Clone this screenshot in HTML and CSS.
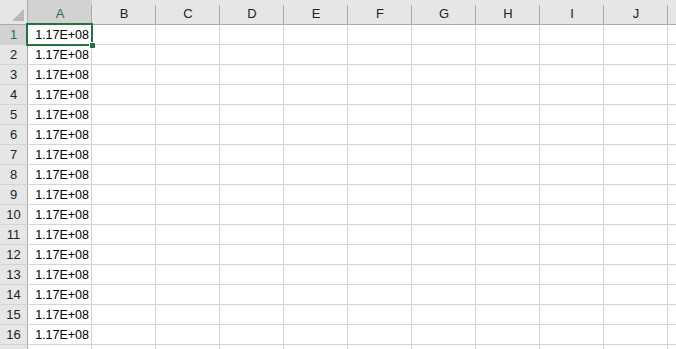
FILE: index.html
```html
<!DOCTYPE html>
<html lang="en">
<head>
    <meta charset="UTF-8">
    <title>Sheet1</title>
    <link rel="stylesheet" href="styles.css">
</head>
<body>
    <div class="sheet" id="sheet">
        <div class="corner"><span class="corner-arrow"></span></div>
    </div>
    <div class="selection"><span class="fill-handle"></span></div>

    <script>
        const cols = ['A', 'B', 'C', 'D', 'E', 'F', 'G', 'H', 'I', 'J', ''];
        const sheet = document.getElementById('sheet');

        cols.forEach(letter => {
            const head = document.createElement('div');
            head.className = 'col-head' + (letter === 'A' ? ' active' : '');
            head.textContent = letter;
            sheet.appendChild(head);
        });

        // row 17 only peeks in at the bottom edge, so it gets no label
        for (let r = 1; r <= 17; r++) {
            const rowHead = document.createElement('div');
            rowHead.className = 'row-head' + (r === 1 ? ' active' : '');
            if (r <= 16) rowHead.textContent = r;
            sheet.appendChild(rowHead);

            cols.forEach((letter, i) => {
                const cell = document.createElement('div');
                cell.className = 'cell';
                if (i === 0 && r <= 16) cell.textContent = '1.17E+08';
                sheet.appendChild(cell);
            });
        }
    </script>
</body>
</html>
```

FILE: styles.css
```css
body {
    margin: 0;
    overflow: hidden;
    background-color: white;
    font-family: "Liberation Sans", Arial, sans-serif;
}

.sheet {
    display: grid;
    grid-template-columns: 28px repeat(11, 64px);
    grid-template-rows: 25px;
    grid-auto-rows: 20px;
}

.corner {
    position: relative;
    background-color: #e6e6e6;
    border-right: 1px solid #ababab;
    border-bottom: 1px solid #ababab;
}

.corner-arrow {
    position: absolute;
    right: 3px;
    bottom: 3px;
    width: 0;
    height: 0;
    border-left: 12px solid transparent;
    border-bottom: 12px solid #b8b8b8;
}

.col-head {
    display: flex;
    align-items: center;
    justify-content: center;
    padding-top: 3px;
    font-size: 13px;
    color: #222;
    background: #e6e6e6 linear-gradient(#ababab, #ababab) right 5px / 1px 20px no-repeat;
    border-bottom: 1px solid #ababab;
}

.col-head.active {
    background-color: #d2d2d2;
    color: #217346;
    border-bottom: 2px solid #217346;
}

.row-head {
    display: flex;
    align-items: center;
    justify-content: center;
    font-size: 13px;
    color: #222;
    background-color: #e6e6e6;
    border-right: 1px solid #ababab;
    border-bottom: 1px solid #d4d4d4;
}

.row-head.active {
    background-color: #d2d2d2;
    color: #217346;
}

.cell {
    display: flex;
    align-items: center;
    justify-content: flex-end;
    padding-right: 2px;
    font-size: 12.5px;
    color: #000;
    border-right: 1px solid #d4d4d4;
    border-bottom: 1px solid #d4d4d4;
}

.selection {
    position: absolute;
    left: 26px;
    top: 23px;
    width: 63px;
    height: 19px;
    border: 2px solid #217346;
}

.fill-handle {
    position: absolute;
    right: -5px;
    bottom: -5px;
    width: 5px;
    height: 5px;
    background-color: #217346;
    border: 1px solid white;
}
```
